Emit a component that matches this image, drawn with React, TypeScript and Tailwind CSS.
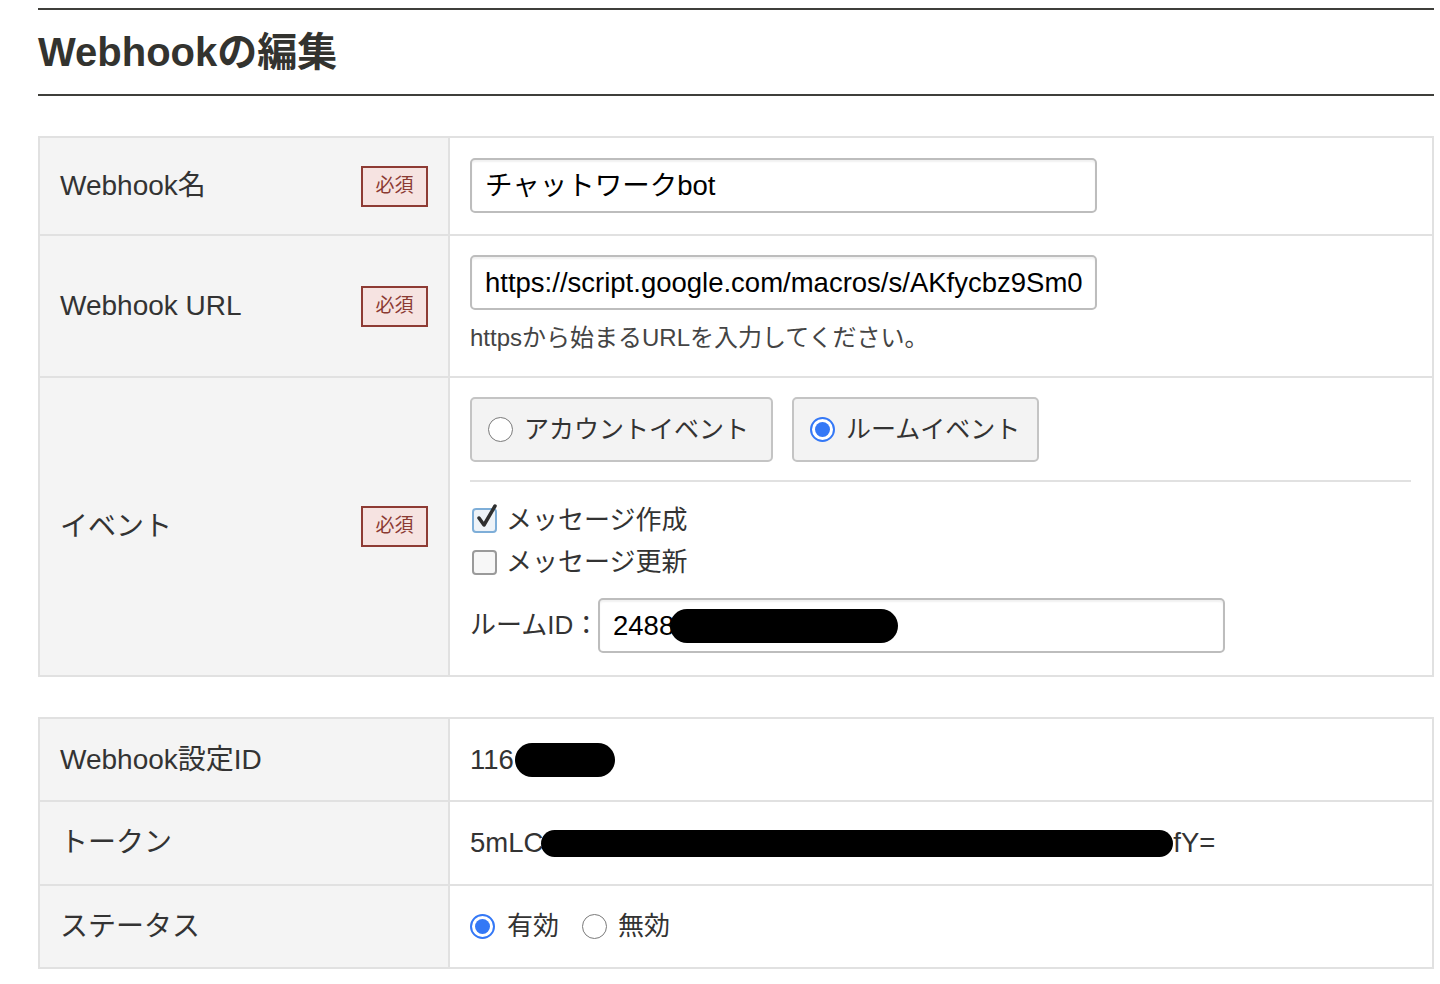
import React from "react";

const font = "font-['Liberation_Sans','Noto_Sans_CJK_JP',sans-serif]";

function Badge() {
    return (
        <span className="flex h-[41px] w-[67px] shrink-0 items-center justify-center border-2 border-[#8e3b34] bg-[#f6e3e1] text-[19px] text-[#8b3a32]">
            必須
        </span>
    );
}

function Radio({ checked }: { checked?: boolean }) {
    if (checked) {
        return (
            <span className="flex h-[25px] w-[25px] shrink-0 items-center justify-center rounded-full border-2 border-[#3478f6] bg-white">
                <span className="h-[15px] w-[15px] rounded-full bg-[#3478f6]" />
            </span>
        );
    }
    return <span className="h-[25px] w-[25px] shrink-0 rounded-full border-[1.5px] border-[#7a7a7a] bg-white" />;
}

function Checkbox({ checked }: { checked?: boolean }) {
    if (checked) {
        return (
            <span className="relative h-[25px] w-[25px] shrink-0 rounded-[4px] border-2 border-[#7eaed8] bg-[#eef3f8]">
                <svg className="absolute -top-[7px] left-[1px]" width="26" height="28" viewBox="0 0 26 28">
                    <path d="M4 15 L9 22 L20 3" fill="none" stroke="#2f2f2f" strokeWidth="3.5" strokeLinecap="round" strokeLinejoin="round" />
                </svg>
            </span>
        );
    }
    return <span className="h-[25px] w-[25px] shrink-0 rounded-[4px] border-2 border-[#9a9a9a] bg-[#f7f7f7]" />;
}

function TextInput({ value, children }: { value?: string; children?: React.ReactNode }) {
    return (
        <div className="flex h-[55px] w-[627px] shrink-0 items-center overflow-hidden whitespace-nowrap rounded-[5px] border-2 border-[#bdbdbd] bg-white pl-[13px] text-[27.5px] text-black shadow-[inset_0_2px_2px_rgba(0,0,0,0.06)]">
            {value}
            {children}
        </div>
    );
}

function Row({ label, badge, children, className = "" }: { label: string; badge?: boolean; children: React.ReactNode; className?: string }) {
    return (
        <div className={`flex border-t-2 border-[#e1e1e1] first:border-t-0 ${className}`}>
            <div className="flex w-[410px] shrink-0 items-center justify-between border-r-2 border-[#e1e1e1] bg-[#f4f4f4] pl-[20px] pr-[20px] text-[28px] text-[#333]">
                <span>{label}</span>
                {badge && <Badge />}
            </div>
            <div className="flex-1 bg-white pl-[20px] pr-[21px]">{children}</div>
        </div>
    );
}

export default function App() {
    return (
        <div className={`min-h-screen bg-white pl-[38px] pr-[6px] pt-[8px] ${font}`}>
            {/* Title */}
            <div className="flex h-[88px] items-center border-y-2 border-[#3f3f3b]">
                <h1 className="text-[40px] font-bold text-[#33332f]">Webhookの編集</h1>
            </div>

            {/* Edit form */}
            <div className="mt-[40px] border-2 border-[#e1e1e1]">
                <Row label="Webhook名" badge>
                    <div className="pb-[21px] pt-[20px]">
                        <TextInput value="チャットワークbot" />
                    </div>
                </Row>
                <Row label="Webhook URL" badge>
                    <div className="pb-[21px] pt-[19px]">
                        <TextInput value="https://script.google.com/macros/s/AKfycbz9Sm0" />
                        <p className="mt-[11px] text-[24px] leading-[34px] text-[#444]">httpsから始まるURLを入力してください。</p>
                    </div>
                </Row>
                <Row label="イベント" badge>
                    <div className="pb-[22px] pt-[19px]">
                        <div className="flex gap-[19px]">
                            <div className="flex h-[65px] w-[303px] items-center gap-[11px] rounded-[5px] border-2 border-[#c4c4c4] bg-[#f3f3f3] pl-[16px] text-[25px] text-[#333]">
                                <Radio />
                                <span>アカウントイベント</span>
                            </div>
                            <div className="flex h-[65px] w-[247px] items-center gap-[11px] rounded-[5px] border-2 border-[#c4c4c4] bg-[#f3f3f3] pl-[16px] text-[25px] text-[#333]">
                                <Radio checked />
                                <span>ルームイベント</span>
                            </div>
                        </div>
                        <div className="mt-[18px] h-[2px] bg-[#e1e1e1]" />
                        <div className="mt-[17px] flex flex-col pl-[2px] text-[26px] text-[#333]">
                            <label className="flex h-[42px] items-center gap-[9px]">
                                <Checkbox checked />
                                <span>メッセージ作成</span>
                            </label>
                            <label className="flex h-[42px] items-center gap-[9px]">
                                <Checkbox />
                                <span>メッセージ更新</span>
                            </label>
                        </div>
                        <div className="mt-[15px] flex items-center text-[26px] text-[#333]">
                            <span className="w-[128px] whitespace-nowrap">ルームID：</span>
                            <TextInput value="2488">
                                <span className="ml-[-4px] h-[34px] w-[228px] shrink-0 rounded-full bg-black" />
                            </TextInput>
                        </div>
                    </div>
                </Row>
            </div>

            {/* Info table */}
            <div className="mt-[40px] border-2 border-[#e1e1e1]">
                <Row label="Webhook設定ID" className="h-[81px]">
                    <div className="flex h-full items-center text-[27.5px] text-[#333]">
                        116
                        <span className="ml-[1px] h-[34px] w-[100px] rounded-full bg-black" />
                    </div>
                </Row>
                <Row label="トークン" className="h-[84px]">
                    <div className="flex h-full items-center text-[27.5px] text-[#333]">
                        5mLC
                        <span className="ml-[-2px] h-[27px] w-[632px] rounded-full bg-black" />
                        fY=
                    </div>
                </Row>
                <Row label="ステータス" className="h-[83px]">
                    <div className="flex h-full items-center text-[26px] text-[#333]">
                        <label className="flex items-center gap-[12px]">
                            <Radio checked />
                            <span>有効</span>
                        </label>
                        <label className="ml-[23px] flex items-center gap-[11px]">
                            <Radio />
                            <span>無効</span>
                        </label>
                    </div>
                </Row>
            </div>
        </div>
    );
}
